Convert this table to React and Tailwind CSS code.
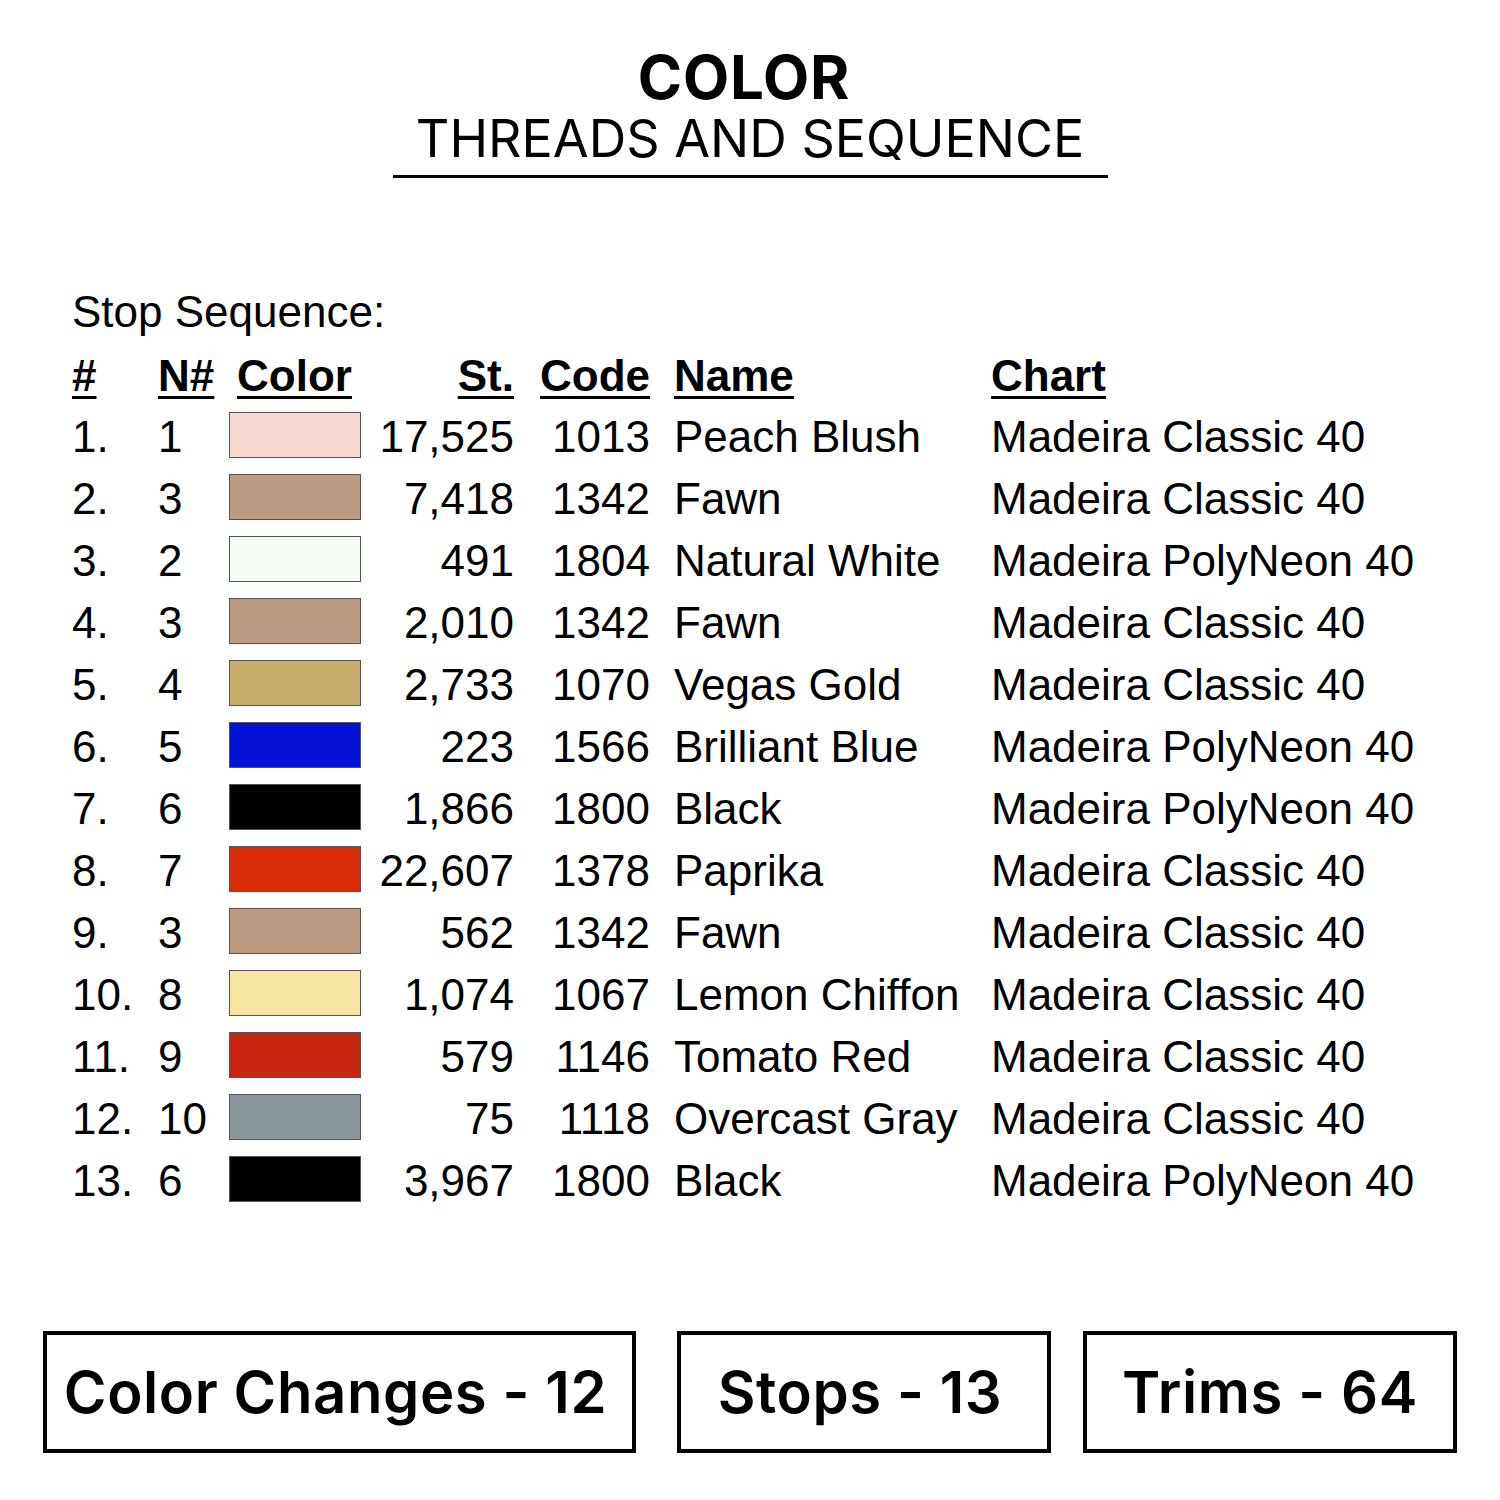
import React from 'react';

const rows = [
  { n: '1', color: '#f8d9d1', st: '17,525', code: '1013', name: 'Peach Blush', chart: 'Madeira Classic 40' },
  { n: '3', color: '#bd9a83', st: '7,418', code: '1342', name: 'Fawn', chart: 'Madeira Classic 40' },
  { n: '2', color: '#f6fcf6', st: '491', code: '1804', name: 'Natural White', chart: 'Madeira PolyNeon 40' },
  { n: '3', color: '#bd9a83', st: '2,010', code: '1342', name: 'Fawn', chart: 'Madeira Classic 40' },
  { n: '4', color: '#c9ac6c', st: '2,733', code: '1070', name: 'Vegas Gold', chart: 'Madeira Classic 40' },
  { n: '5', color: '#0412d6', st: '223', code: '1566', name: 'Brilliant Blue', chart: 'Madeira PolyNeon 40' },
  { n: '6', color: '#000000', st: '1,866', code: '1800', name: 'Black', chart: 'Madeira PolyNeon 40' },
  { n: '7', color: '#d72c05', st: '22,607', code: '1378', name: 'Paprika', chart: 'Madeira Classic 40' },
  { n: '3', color: '#bd9a83', st: '562', code: '1342', name: 'Fawn', chart: 'Madeira Classic 40' },
  { n: '8', color: '#f8e4a1', st: '1,074', code: '1067', name: 'Lemon Chiffon', chart: 'Madeira Classic 40' },
  { n: '9', color: '#c7260f', st: '579', code: '1146', name: 'Tomato Red', chart: 'Madeira Classic 40' },
  { n: '10', color: '#8b979b', st: '75', code: '1118', name: 'Overcast Gray', chart: 'Madeira Classic 40' },
  { n: '6', color: '#000000', st: '3,967', code: '1800', name: 'Black', chart: 'Madeira PolyNeon 40' },
];

const head = 'underline decoration-[3px] underline-offset-[5px]';

function App() {
  return (
    <div className="w-[1500px] h-[1500px] bg-white text-black flex flex-col">
      {/* title */}
      <div className="flex flex-col items-center pt-[47px] font-['Inter',sans-serif]">
        <h1 className="mr-[12px] text-[60px] leading-none font-bold tracking-[0.8px]">COLOR</h1>
        <h2 className="mt-[6px] text-[52px] leading-none font-normal">THREADS AND SEQUENCE</h2>
        <div className="mt-[10px] h-[3px] w-[715px] bg-black"></div>
      </div>

      {/* table */}
      <div className="pl-[72px] mt-[112px] font-['Liberation_Sans',Arial,sans-serif] text-[44px] leading-none">
        <div className="h-[44px] flex items-center">Stop Sequence:</div>

        <div className="mt-[12px] h-[60px] flex items-center font-bold">
          <div className="w-[86px]"><span className={head}>#</span></div>
          <div className="w-[71px]"><span className={head}>N#</span></div>
          <div className="w-[132px] pl-[8px]"><span className={head}>Color</span></div>
          <div className="w-[153px] text-right"><span className={head}>St.</span></div>
          <div className="w-[136px] text-right"><span className={head}>Code</span></div>
          <div className="w-[341px] pl-[24px]"><span className={head}>Name</span></div>
          <div className="flex-1"><span className={head}>Chart</span></div>
        </div>

        {rows.map((r, i) => (
          <div key={i} className="h-[62px] flex items-center whitespace-nowrap">
            <div className="w-[86px]">{i + 1}.</div>
            <div className="w-[71px]">{r.n}</div>
            <div className="w-[132px] mb-[5px]">
              <div className="h-[46px] w-[132px] border-[1.5px] border-[#555]" style={{ backgroundColor: r.color }}></div>
            </div>
            <div className="w-[153px] text-right">{r.st}</div>
            <div className="w-[136px] text-right">{r.code}</div>
            <div className="w-[341px] pl-[24px]">{r.name}</div>
            <div className="flex-1">{r.chart}</div>
          </div>
        ))}
      </div>

      {/* totals */}
      <div className="mt-[119px] flex font-['Inter',sans-serif] font-semibold text-[58px] leading-none tracking-[0.6px]">
        <div className="ml-[43px] w-[593px] h-[122px] border-4 border-black flex items-center justify-center pr-[8px]">Color Changes - 12</div>
        <div className="ml-[41px] w-[374px] h-[122px] border-4 border-black flex items-center justify-center pr-[8px]">Stops - 13</div>
        <div className="ml-[32px] w-[374px] h-[122px] border-4 border-black flex items-center justify-center">Trims - 64</div>
      </div>
    </div>
  );
}

export default App;
